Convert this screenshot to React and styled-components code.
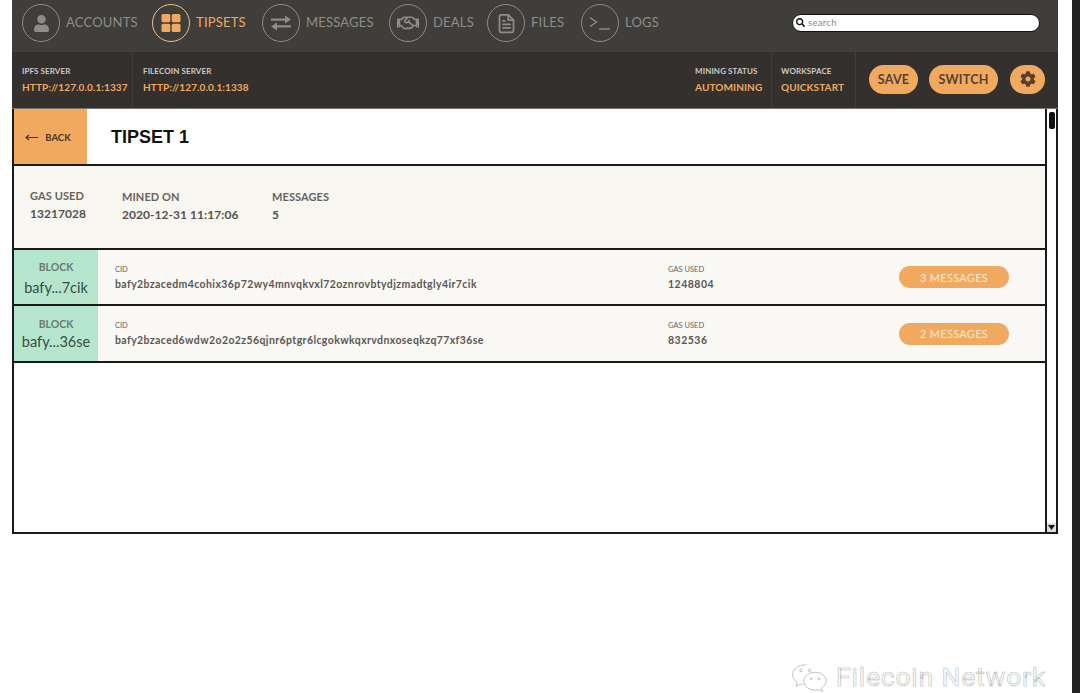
import React from "react";
import styled, { createGlobalStyle } from "styled-components";
import { FaUser, FaRegHandshake, FaCog, FaSearch } from "react-icons/fa";
import { FiFileText } from "react-icons/fi";

const Global = createGlobalStyle`
  html, body { margin: 0; padding: 0; background: #fff; }
  #root { height: 693px; overflow: hidden; }
`;

const FONT = `"Lato", "Noto Sans", sans-serif`;
const ORANGE = "#f0a95e";

const Page = styled.div`
  position: relative;
  display: flex;
  width: 1080px;
  height: 693px;
  overflow: hidden;
  font-family: ${FONT};
  background: #fff;
`;
const Frame = styled.div`
  margin-left: 12px;
  width: 1046px;
  display: flex;
  flex-direction: column;
`;
const EdgeStrip = styled.div`
  margin-left: 14px;
  width: 8px;
  background: #232323;
`;
const Nav = styled.nav`
  height: 52px;
  box-sizing: border-box;
  background: #403e3b;
  display: flex;
  align-items: flex-start;
  padding: 4px 0 0 10px;
  gap: 14px;
`;
const NavItem = styled.div`
  display: flex;
  align-items: center;
  gap: 6px;
  color: ${(p) => (p.$active ? ORANGE : "#8f8c88")};
  font-size: 13px;
  letter-spacing: 0.2px;
  height: 38px;
`;
const NavLabel = styled.span`
  width: ${(p) => p.$w}px;
  padding-bottom: 2px;
  white-space: nowrap;
`;
const Ring = styled.div`
  width: 38px;
  height: 38px;
  box-sizing: border-box;
  border: 1.5px solid ${(p) => (p.$active ? "#eebd8a" : "#8f8c88")};
  border-radius: 50%;
  display: flex;
  align-items: center;
  justify-content: center;
  color: inherit;
`;
const SearchBox = styled.div`
  position: absolute;
  left: 792px;
  top: 14px;
  width: 248px;
  height: 18px;
  box-sizing: border-box;
  background: #fff;
  border: 1.5px solid #111;
  border-radius: 9px;
  display: flex;
  align-items: center;
  gap: 3px;
  padding: 0 0 1px 3px;
  font-size: 9.5px;
  letter-spacing: 0.3px;
  color: #8a8a8a;
`;
const StatusBar = styled.div`
  height: 57px;
  box-sizing: border-box;
  background: #33302e;
  display: flex;
  align-items: stretch;
  border-bottom: 1px solid #77756f;
`;
const StatCell = styled.div`
  box-sizing: border-box;
  width: ${(p) => p.$w}px;
  padding: 14px 0 0 ${(p) => p.$pad ?? 10}px;
  border-right: 1px solid ${(p) => (p.$noRule ? "transparent" : "#3f3c39")};
  display: flex;
  flex-direction: column;
  gap: 5px;
  white-space: nowrap;
`;
const StatLabel = styled.div`
  font-size: 8px;
  font-weight: 700;
  line-height: 10px;
  color: #cfcac4;
  letter-spacing: 0.1px;
`;
const StatValue = styled.div`
  font-size: 10px;
  font-weight: 700;
  line-height: 13px;
  letter-spacing: 0.12px;
  color: ${ORANGE};
`;
const Spacer = styled.div`
  flex: 1;
`;
const BarActions = styled.div`
  display: flex;
  align-items: center;
  padding: 0 13px 2px 13px;
  gap: 11px;
`;
const PillButton = styled.div`
  height: 29px;
  width: ${(p) => p.$w}px;
  margin-left: ${(p) => p.$shift ?? 0}px;
  border-radius: 15px;
  background: ${ORANGE};
  color: #5a3f2d;
  font-size: 12.5px;
  font-weight: 700;
  letter-spacing: 0.2px;
  display: flex;
  align-items: center;
  justify-content: center;
`;
const Body = styled.div`
  display: flex;
  height: 425px;
`;
const Panel = styled.div`
  flex: 1;
  box-sizing: border-box;
  border: solid #1a1a1a;
  border-width: 0 2px 2px 2px;
  display: flex;
  flex-direction: column;
`;
const TitleRow = styled.div`
  height: 57px;
  flex: none;
  box-sizing: border-box;
  display: flex;
  align-items: stretch;
  border-bottom: 2px solid #1a1a1a;
`;
const BackButton = styled.div`
  width: 73px;
  box-sizing: border-box;
  background: ${ORANGE};
  color: #4a3528;
  display: flex;
  align-items: center;
  justify-content: center;
  gap: 7px;
  padding: 2px 5px 0 0;
  font-size: 9.5px;
  font-weight: 700;
`;
const Title = styled.div`
  font-family: "Liberation Sans", sans-serif;
  font-weight: 700;
  font-size: 18px;
  color: #111;
  display: flex;
  align-items: center;
  padding: 1px 0 0 24px;
`;
const Summary = styled.div`
  height: 84px;
  flex: none;
  box-sizing: border-box;
  background: #f8f6f1;
  border-bottom: 2px solid #1a1a1a;
  display: flex;
  padding: 23px 0 0 16px;
`;
const SumCol = styled.div`
  width: ${(p) => p.$w}px;
  margin-top: ${(p) => p.$top ?? 0}px;
  display: flex;
  flex-direction: column;
  gap: 4px;
  color: #55524e;
`;
const SumLabel = styled.div`
  font-size: 11px;
  font-weight: 700;
  line-height: 13px;
  letter-spacing: 0.1px;
  color: #66635f;
`;
const SumValue = styled.div`
  font-size: 12px;
  font-weight: 700;
  line-height: 16px;
  letter-spacing: 0.05px;
`;
const BlockRow = styled.div`
  height: ${(p) => p.$h}px;
  flex: none;
  box-sizing: border-box;
  background: #f9f8f4;
  border-bottom: 2px solid #1a1a1a;
  display: flex;
  align-items: stretch;
`;
const BlockTag = styled.div`
  width: 84px;
  flex: none;
  box-sizing: border-box;
  background: #b5e6cd;
  display: flex;
  flex-direction: column;
  align-items: center;
  gap: ${(p) => p.$gap}px;
  padding-top: ${(p) => p.$top}px;
  color: #3c4a44;
  white-space: nowrap;
`;
const BlockLabel = styled.div`
  font-size: 10.5px;
  line-height: 13px;
  font-weight: 700;
  color: #6b7a72;
`;
const BlockId = styled.div`
  font-size: 14.5px;
  line-height: 18px;
`;
const Field = styled.div`
  display: flex;
  flex-direction: column;
  justify-content: center;
  gap: 3px;
  width: ${(p) => p.$w}px;
  padding: 1px 0 0 ${(p) => p.$pad}px;
  white-space: nowrap;
`;
const FieldLabel = styled.div`
  font-size: 7.5px;
  line-height: 10px;
  color: #66635f;
`;
const FieldValue = styled.div`
  font-size: 10.5px;
  line-height: 13px;
  font-weight: 700;
  letter-spacing: ${(p) => p.$ls ?? 0.4}px;
  color: #5a5753;
`;
const MessagesPill = styled.div`
  align-self: center;
  width: 110px;
  height: 22px;
  border-radius: 11px;
  background: ${ORANGE};
  color: #fbe9d4;
  font-size: 11px;
  letter-spacing: 0.3px;
  display: flex;
  align-items: center;
  justify-content: center;
`;
const Blank = styled.div`
  flex: 1;
  background: #fff;
`;
const Scrollbar = styled.div`
  width: 11px;
  box-sizing: border-box;
  border-right: 2px solid #1a1a1a;
  border-bottom: 2px solid #1a1a1a;
  background: #fff;
  display: flex;
  flex-direction: column;
  justify-content: space-between;
  align-items: center;
`;
const Thumb = styled.div`
  width: 6px;
  height: 17px;
  margin-top: 3px;
  border-radius: 2px;
  background: #111;
`;
const ScrollArrow = styled.div`
  width: 100%;
  height: 9px;
  background: #ddd;
  color: #111;
  display: flex;
  align-items: center;
  justify-content: center;
`;
const Watermark = styled.div`
  position: absolute;
  left: 790px;
  top: 662px;
  display: flex;
  align-items: center;
  gap: 7px;
  font-family: "Roboto", sans-serif;
  font-size: 26.5px;
  line-height: 30px;
  letter-spacing: 0.8px;
  color: #fff;
  -webkit-text-stroke: 0.6px #b9b9b9;
  white-space: nowrap;
`;

const TipsetsIcon = () => (
  <svg width="20" height="18" viewBox="0 0 20 18">
    <rect x="0.5" y="0" width="8.8" height="8.2" rx="1.5" fill="currentColor" />
    <rect x="10.7" y="0" width="8.8" height="8.2" rx="1.5" fill="currentColor" />
    <rect x="0.5" y="9.8" width="8.8" height="8.2" rx="1.5" fill="currentColor" />
    <rect x="10.7" y="9.8" width="8.8" height="8.2" rx="1.5" fill="currentColor" />
  </svg>
);
const ExchangeIcon = () => (
  <svg width="22" height="16" viewBox="0 0 22 16" fill="currentColor">
    <path d="M1 3.6h14V0.6l6 4-6 4V5.8H1z" />
    <path d="M21 10.2H7V7.4l-6 4 6 4v-3H21z" />
  </svg>
);
const TerminalIcon = () => (
  <svg width="22" height="16" viewBox="0 0 22 16" fill="none" stroke="currentColor" strokeWidth="1.4">
    <path d="M1 2.5l6.5 4.5L1 11.5" />
    <path d="M10 14h11" />
  </svg>
);
const ArrowLeft = () => (
  <svg width="13" height="7" viewBox="0 0 13 7" fill="none" stroke="currentColor" strokeWidth="1.2">
    <path d="M13 3.5H1M4 1L1 3.5L4 6" />
  </svg>
);
const WeChatIcon = () => (
  <svg width="39" height="30" viewBox="0 0 40 32" fill="none" stroke="#bdbdbd" strokeWidth="1">
    <path d="M16 3C8 3 2 7.500 2 13.500c0 3.400 2 6.300 5 8.300L5.500 26l5-2.500c1 .3 2 .4 3 .5" />
    <path d="M26 11c-6.600 0-12 4-12 9.500S19.400 30 26 30c1.300 0 2.500-.2 3.600-.5l4.400 2-1.200-3.800c3-1.800 5-4.500 5-7.500C37.800 15 32.600 11 26 11z" />
    <circle cx="11" cy="9" r="1.400" />
    <circle cx="20" cy="9" r="1.400" />
    <circle cx="22" cy="18" r="1" />
    <circle cx="30" cy="18" r="1" />
  </svg>
);

const navItems = [
  { label: "ACCOUNTS", w: 72, icon: <FaUser size={17} /> },
  { label: "TIPSETS", w: 52, icon: <TipsetsIcon />, active: true },
  { label: "MESSAGES", w: 69, icon: <ExchangeIcon /> },
  { label: "DEALS", w: 40, icon: <FaRegHandshake size={22} /> },
  { label: "FILES", w: 36, icon: <FiFileText size={21} /> },
  { label: "LOGS", w: 36, icon: <TerminalIcon /> },
];

const blocks = [
  { short: "bafy...7cik", cid: "bafy2bzacedm4cohix36p72wy4mnvqkvxl72oznrovbtydjzmadtgly4ir7cik", gas: "1248804", msgs: "3 MESSAGES", gap: 5, top: 11, h: 56 },
  { short: "bafy...36se", cid: "bafy2bzaced6wdw2o2o2z56qjnr6ptgr6lcgokwkqxrvdnxoseqkzq77xf36se", gas: "832536", msgs: "2 MESSAGES", gap: 2, top: 12, h: 57 },
];

export default function App() {
  return (
    <Page>
      <Global />
      <Frame>
        <Nav>
          {navItems.map((n) => (
            <NavItem key={n.label} $active={n.active}>
              <Ring $active={n.active}>{n.icon}</Ring>
              <NavLabel $w={n.w}>{n.label}</NavLabel>
            </NavItem>
          ))}
        </Nav>
        <StatusBar>
          <StatCell $w={121}>
            <StatLabel>IPFS SERVER</StatLabel>
            <StatValue>HTTP://127.0.0.1:1337</StatValue>
          </StatCell>
          <StatCell $w={120} $noRule>
            <StatLabel>FILECOIN SERVER</StatLabel>
            <StatValue>HTTP://127.0.0.1:1338</StatValue>
          </StatCell>
          <Spacer />
          <StatCell $w={86} $pad={9}>
            <StatLabel>MINING STATUS</StatLabel>
            <StatValue>AUTOMINING</StatValue>
          </StatCell>
          <StatCell $w={84} $pad={9}>
            <StatLabel>WORKSPACE</StatLabel>
            <StatValue>QUICKSTART</StatValue>
          </StatCell>
          <BarActions>
            <PillButton $w={49}>SAVE</PillButton>
            <PillButton $w={69}>SWITCH</PillButton>
            <PillButton $w={35} $shift={1}>
              <FaCog size={16} />
            </PillButton>
          </BarActions>
        </StatusBar>
        <Body>
          <Panel>
            <TitleRow>
              <BackButton>
                <ArrowLeft />
                BACK
              </BackButton>
              <Title>TIPSET 1</Title>
            </TitleRow>
            <Summary>
              <SumCol $w={92}>
                <SumLabel>GAS USED</SumLabel>
                <SumValue>13217028</SumValue>
              </SumCol>
              <SumCol $w={150} $top={1}>
                <SumLabel>MINED ON</SumLabel>
                <SumValue>2020-12-31 11:17:06</SumValue>
              </SumCol>
              <SumCol $w={100} $top={1}>
                <SumLabel>MESSAGES</SumLabel>
                <SumValue>5</SumValue>
              </SumCol>
            </Summary>
            {blocks.map((b) => (
              <BlockRow key={b.cid} $h={b.h}>
                <BlockTag $gap={b.gap} $top={b.top}>
                  <BlockLabel>BLOCK</BlockLabel>
                  <BlockId>{b.short}</BlockId>
                </BlockTag>
                <Field $w={553} $pad={17}>
                  <FieldLabel>CID</FieldLabel>
                  <FieldValue>{b.cid}</FieldValue>
                </Field>
                <Field $w={231} $pad={0}>
                  <FieldLabel>GAS USED</FieldLabel>
                  <FieldValue $ls={0.5}>{b.gas}</FieldValue>
                </Field>
                <MessagesPill>{b.msgs}</MessagesPill>
              </BlockRow>
            ))}
            <Blank />
          </Panel>
          <Scrollbar>
            <Thumb />
            <ScrollArrow>
              <svg width="7" height="5" viewBox="0 0 7 5">
                <path d="M0 0h7L3.500 5z" fill="currentColor" />
              </svg>
            </ScrollArrow>
          </Scrollbar>
        </Body>
      </Frame>
      <EdgeStrip />
      <SearchBox>
        <FaSearch size={9} color="#111" />
        search
      </SearchBox>
      <Watermark>
        <WeChatIcon />
        Filecoin Network
      </Watermark>
    </Page>
  );
}
